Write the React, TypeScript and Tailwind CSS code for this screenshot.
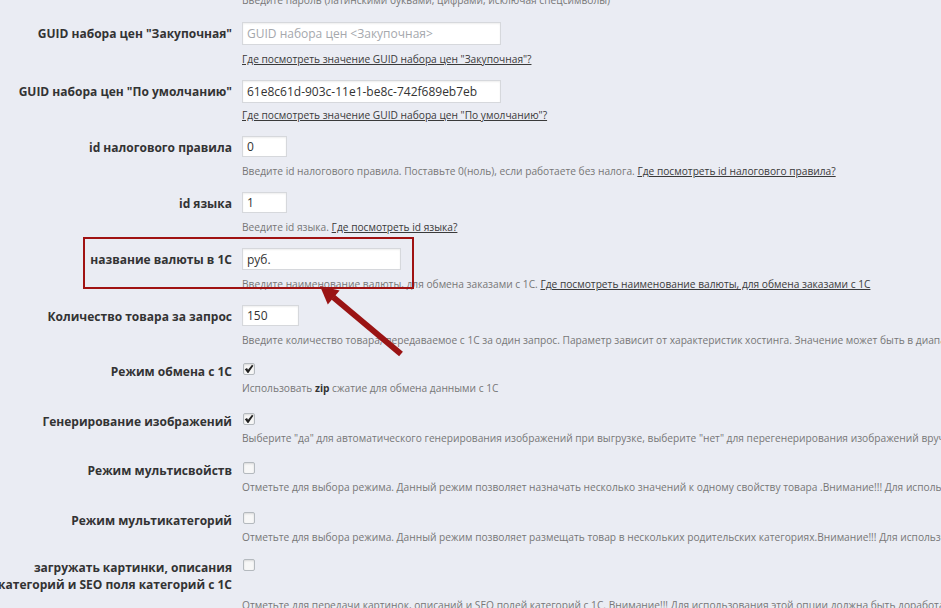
import React from 'react'

const descCls = 'text-[10.2px] leading-[14px] text-[#777] whitespace-nowrap'
const linkCls = 'text-[#3a3a3a] underline'

function TextInput({ width, value, placeholder, height = 'h-[22px]' }: { width: string; value?: string; placeholder?: string; height?: string }) {
  return (
    <input
      readOnly
      value={value ?? ''}
      placeholder={placeholder}
      className={`${width} ${height} block border border-[#d6d8dc] bg-white px-[4px] text-[12px] text-[#333] shadow-[inset_0_1px_2px_rgba(0,0,0,0.07)] outline-none placeholder:text-[#a5a8ad]`}
    />
  )
}

function Checkbox({ checked }: { checked?: boolean }) {
  return (
    <div className="ml-[1px] flex h-[12px] w-[12px] items-center justify-center rounded-[2px] border border-[#b4b9be] bg-[#f7f7f7] shadow-[inset_0_1px_2px_rgba(0,0,0,0.12)]">
      {checked && (
        <svg width="10" height="10" viewBox="0 0 10 10">
          <path d="M0.8 5.2 L3 4 L4 5.8 L8 0.8 L9.4 1.8 L4.4 9 L3.6 9 Z" fill="#222" />
        </svg>
      )}
    </div>
  )
}

function Row({
  label,
  control,
  children,
  kind = 'input',
  descGap,
  pad,
}: {
  label: React.ReactNode
  control: React.ReactNode
  children?: React.ReactNode
  kind?: 'input' | 'check'
  descGap?: string
  pad?: string
}) {
  const gap = descGap ?? (kind === 'input' ? 'mt-[6px]' : 'mt-[6px]')
  const padding = pad ?? (kind === 'input' ? 'py-[7px]' : 'pt-[9px] pb-[8.5px]')
  return (
    <div className={`flex ${padding}`}>
      <div
        className={`w-[272px] shrink-0 text-right text-[12px] font-bold leading-[17px] text-[#333] whitespace-nowrap ${
          kind === 'input' ? 'pt-[3px]' : 'pt-0'
        }`}
      >
        {label}
      </div>
      <div className="pl-[10px]">
        {control}
        <div className={`${gap} ${descCls}`}>{children}</div>
      </div>
    </div>
  )
}

export default function App() {
  return (
    <div className="relative h-[608px] w-[941px] overflow-hidden bg-[#eaecf3] font-['Open_Sans',sans-serif]">
      <div className="-ml-[40px] -mt-[7px]">
        <div className="flex pb-[8px]">
          <div className="w-[272px] shrink-0" />
          <div className={`pl-[10px] ${descCls}`}>Введите пароль (латинскими буквами, цифрами, исключая спецсимволы)</div>
        </div>

        <Row
          label={'GUID набора цен "Закупочная"'}
          control={<TextInput width="w-[259px]" height="h-[23px]" placeholder="GUID набора цен <Закупочная>" />}
          descGap="mt-[7px]"
        >
          <span className={linkCls}>Где посмотреть значение GUID набора цен "Закупочная"?</span>
        </Row>

        <Row
          label={'GUID набора цен "По умолчанию"'}
          control={<TextInput width="w-[259px]" height="h-[23px]" value="61e8c61d-903c-11e1-be8c-742f689eb7eb" />}
          descGap="mt-[5px]"
        >
          <span className={linkCls}>Где посмотреть значение GUID набора цен "По умолчанию"?</span>
        </Row>

        <Row label="id налогового правила" control={<TextInput width="w-[45px]" height="h-[21px]" value="0" />} descGap="mt-[7px]">
          Введите id налогового правила. Поставьте 0(ноль), если работаете без налога.{' '}
          <span className={linkCls}>Где посмотреть id налогового правила?</span>
        </Row>

        <Row label="id языка" control={<TextInput width="w-[45px]" height="h-[21px]" value="1" />} descGap="mt-[7px]">
          Веедите id языка. <span className={linkCls}>Где посмотреть id языка?</span>
        </Row>

        <Row label="название валюты в 1С" control={<TextInput width="w-[159px]" value="руб." />} descGap="mt-[7px]">
          Введите наименование валюты, для обмена заказами с 1С.{' '}
          <span className={linkCls}>Где посмотреть наименование валюты, для обмена заказами с 1С</span>
        </Row>

        <Row label="Количество товара за запрос" control={<TextInput width="w-[57px]" height="h-[21px]" value="150" />} descGap="mt-[7px]">
          Введите количество товара, передаваемое с 1С за один запрос. Параметр зависит от характеристик хостинга. Значение может быть в диапазоне от 1 до 1000
        </Row>

        <Row kind="check" label="Режим обмена с 1С" control={<Checkbox checked />}>
          Использовать <b className="text-[#333]">zip</b> сжатие для обмена данными с 1С
        </Row>

        <Row kind="check" label="Генерирование изображений" control={<Checkbox checked />}>
          Выберите "да" для автоматического генерирования изображений при выгрузке, выберите "нет" для перегенерирования изображений вручную
        </Row>

        <Row kind="check" label="Режим мультисвойств" control={<Checkbox />}>
          Отметьте для выбора режима. Данный режим позволяет назначать несколько значений к одному свойству товара .Внимание!!! Для использования этой опции
        </Row>

        <Row kind="check" label="Режим мультикатегорий" control={<Checkbox />}>
          Отметьте для выбора режима. Данный режим позволяет размещать товар в нескольких родительских категориях.Внимание!!! Для использования этой опции
        </Row>

        <Row
          kind="check"
          pad="pt-[7px] pb-[7px]"
          label={
            <>
              загружать картинки, описания
              <br />
              категорий и SEO поля категорий с 1С
            </>
          }
          control={<Checkbox />}
          descGap="mt-[27px]"
        >
          Отметьте для передачи картинок, описаний и SEO полей категорий с 1С. Внимание!!! Для использования этой опции должна быть доработана тема
        </Row>
      </div>

      {/* highlight frame */}
      <div className="absolute left-[83px] top-[237px] h-[52px] w-[331px] border-2 border-[#a01212]" />

      {/* arrow */}
      <svg className="absolute left-0 top-0" width="941" height="608" viewBox="0 0 941 608">
        <polygon points="335.2,294.9 331.4,299.5 399.1,356.3 402.9,351.7" fill="#9a1414" />
        <polygon points="320,286 339.6,290.4 327.8,304.6" fill="#9a1414" />
      </svg>
    </div>
  )
}
